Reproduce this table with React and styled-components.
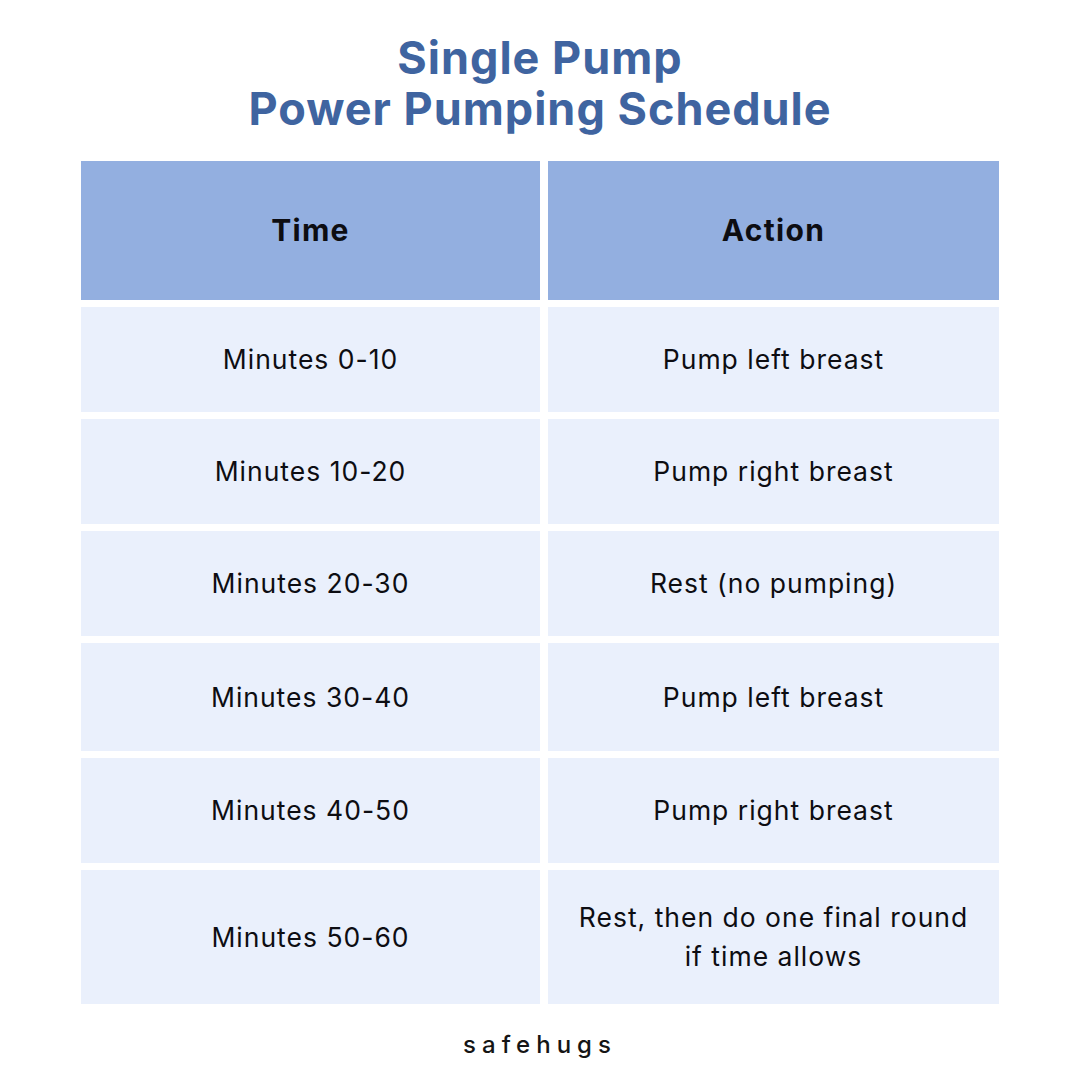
import styled, { createGlobalStyle } from "styled-components";

const GlobalStyle = createGlobalStyle`
    html, body {
        margin: 0;
        padding: 0;
        background: #fff;
    }
    body {
        font-family: Inter, "Noto Sans", sans-serif;
        color: #111;
    }
`;

const Page = styled.div`
    width: 1080px;
    height: 1080px;
    display: flex;
    flex-direction: column;
    align-items: center;
    background: #fff;
`;

const Title = styled.h1`
    margin: 32px 0 0;
    font-size: 45px;
    line-height: 51px;
    font-weight: 700;
    letter-spacing: 1px;
    text-align: center;
    color: #3f64a0;
`;

const Table = styled.div`
    margin-top: 27px;
    display: grid;
    grid-template-columns: 459px 451px;
    grid-template-rows: 139px 105px 105px 105px 108px 105px 134px;
    gap: 7px 8px;
`;

const Cell = styled.div`
    display: flex;
    align-items: center;
    justify-content: center;
    text-align: center;
    background: ${(p) => (p.head ? "#93afe0" : "#eaf0fc")};
    font-size: ${(p) => (p.head ? "30px" : "26.5px")};
    font-weight: ${(p) => (p.head ? 700 : 400)};
    letter-spacing: ${(p) => (p.head ? "1.3px" : "1px")};
    line-height: 39px;
    color: #0d0d12;
    padding: 0 18px;
`;

const Brand = styled.div`
    margin-top: 26px;
    font-size: 24px;
    letter-spacing: 6px;
    font-weight: 500;
    color: #151515;
`;

const rows = [
    ["Minutes 0-10", "Pump left breast"],
    ["Minutes 10-20", "Pump right breast"],
    ["Minutes 20-30", "Rest (no pumping)"],
    ["Minutes 30-40", "Pump left breast"],
    ["Minutes 40-50", "Pump right breast"],
    ["Minutes 50-60", "Rest, then do one final round if time allows"],
];

export default function App() {
    return (
        <Page>
            <GlobalStyle />
            <Title>
                Single Pump
                <br />
                Power Pumping Schedule
            </Title>
            <Table>
                <Cell head>Time</Cell>
                <Cell head>Action</Cell>
                {rows.map(([time, action], i) => (
                    <>
                        <Cell key={"t" + i}>{time}</Cell>
                        <Cell key={"a" + i}>{action}</Cell>
                    </>
                ))}
            </Table>
            <Brand>safehugs</Brand>
        </Page>
    );
}
